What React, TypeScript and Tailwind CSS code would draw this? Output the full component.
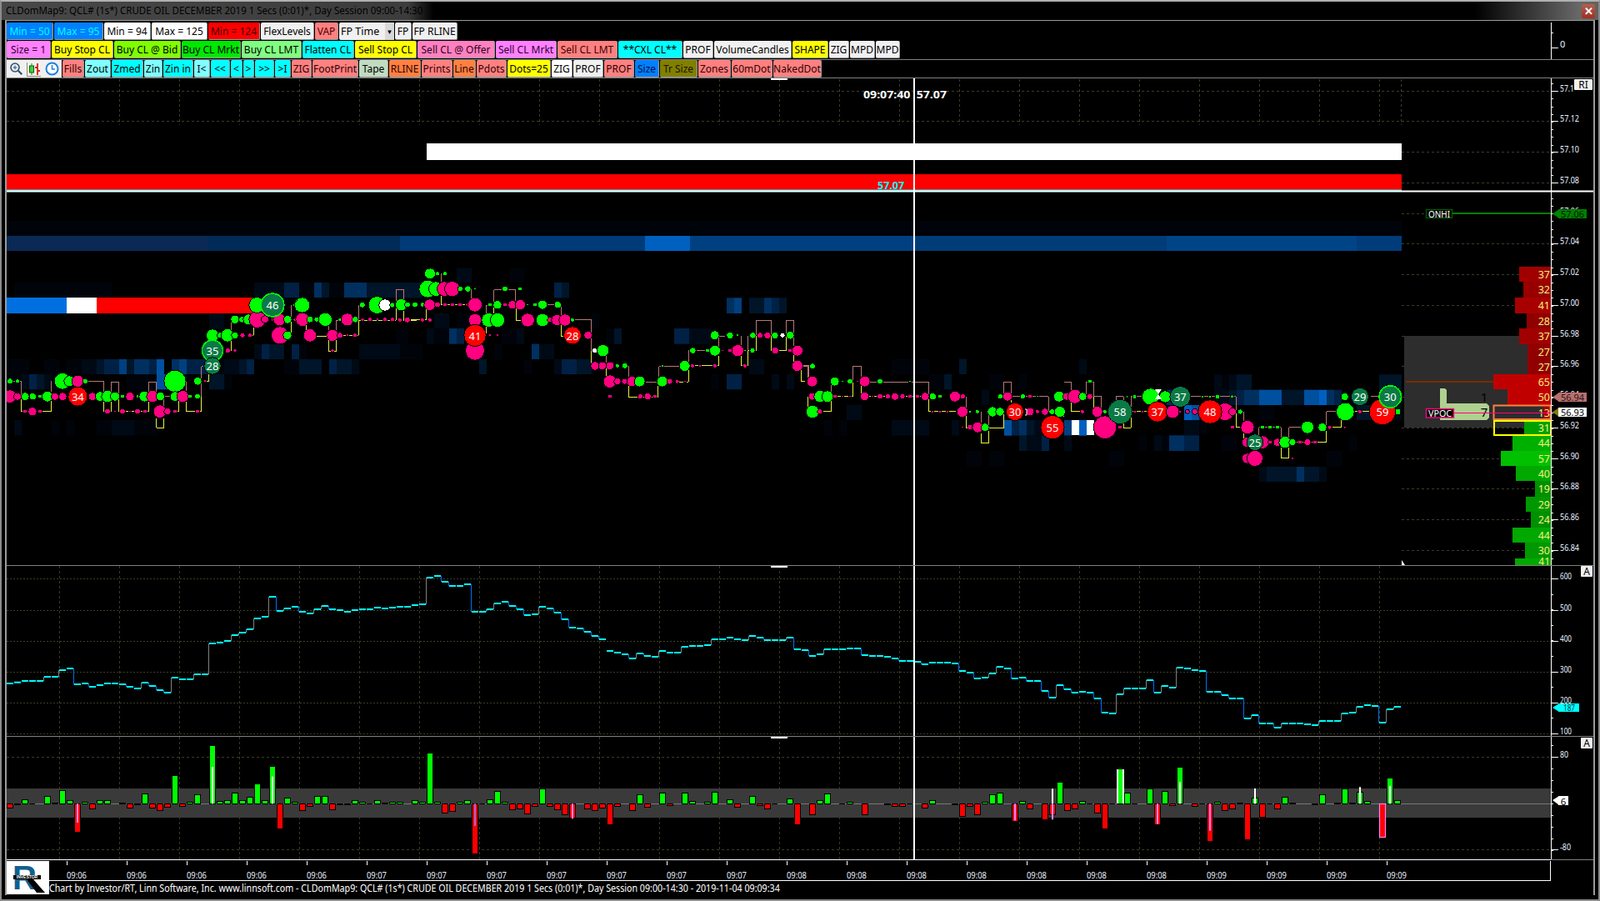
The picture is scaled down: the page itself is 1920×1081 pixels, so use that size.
import React from "react";

type Btn = [string, number, string];
const row1: Btn[] = [
  ["Min = 50", 56, "bg-[#0080ff] text-[#00ffff]"],
  ["Max = 95", 59, "bg-[#0080ff] text-[#00ffff]"],
  ["Min = 94", 56, "bg-white text-black"],
  ["Max = 125", 67, "bg-white text-black"],
  ["Min = 124", 62, "bg-[#ff0000] text-[#400000]"],
  ["FlexLevels", 64, "bg-[#f0f0f0] text-black"],
  ["VAP", 28, "bg-[#ff8080] text-[#500000]"],
];
const row1b: Btn[] = [
  ["FP", 20, "bg-[#f0f0f0] text-black"],
  ["FP RLINE", 54, "bg-[#f0f0f0] text-black"],
];
const row2: Btn[] = [
  ["Size = 1", 53, "bg-[#ff80ff] text-[#300030]"],
  ["Buy Stop CL", 74, "bg-[#ffff00] text-black"],
  ["Buy CL @ Bid", 80, "bg-[#80ff00] text-black"],
  ["Buy CL Mrkt", 71, "bg-[#00e800] text-black"],
  ["Buy CL LMT", 72, "bg-[#80ff80] text-black"],
  ["Flatten CL", 62, "bg-[#00ffff] text-black"],
  ["Sell Stop CL", 74, "bg-[#ffff00] text-black"],
  ["Sell CL @ Offer", 93, "bg-[#ff80c0] text-[#300018]"],
  ["Sell CL Mrkt", 73, "bg-[#ff80ff] text-[#300030]"],
  ["Sell CL LMT", 72, "bg-[#ff8080] text-[#400000]"],
  ["**CXL CL**", 77, "bg-[#00ffff] text-black"],
  ["PROF", 36, "bg-[#f0f0f0] text-black"],
  ["VolumeCandles", 93, "bg-[#f0f0f0] text-black"],
  ["SHAPE", 43, "bg-[#ffff00] text-black"],
  ["ZIG", 24, "bg-[#f0f0f0] text-black"],
  ["MPD", 30, "bg-[#f0f0f0] text-black"],
  ["MPD", 29, "bg-[#f0f0f0] text-black"],
];
const row3: Btn[] = [
  ["Fills", 26, "bg-[#ff8080] text-[#300000]"],
  ["Zout", 31, "bg-[#80ffff] text-black"],
  ["Zmed", 38, "bg-[#00ffff] text-black"],
  ["Zin", 22, "bg-[#80ffff] text-black"],
  ["Zin in", 36, "bg-[#00ffff] text-black"],
  ["I<", 19, "bg-[#80ffff] text-black"],
  ["<<", 23, "bg-[#00ffff] text-black"],
  ["<", 14, "bg-[#00ffff] text-black"],
  [">", 13, "bg-[#00ffff] text-black"],
  [">>", 23, "bg-[#00ffff] text-black"],
  [">I", 19, "bg-[#00ffff] text-black"],
  ["ZIG", 24, "bg-[#ff8080] text-[#300000]"],
  ["FootPrint", 55, "bg-[#ff8080] text-[#300000]"],
  ["Tape", 35, "bg-[#c0dcc0] text-black"],
  ["RLINE", 38, "bg-[#ff8040] text-[#300000]"],
  ["Prints", 37, "bg-[#ff8080] text-[#300000]"],
  ["Line", 27, "bg-[#ff8040] text-[#300000]"],
  ["Pdots", 36, "bg-[#ff8080] text-[#300000]"],
  ["Dots=25", 52, "bg-[#ffff00] text-black"],
  ["ZIG", 25, "bg-white text-black"],
  ["PROF", 36, "bg-[#f0f0f0] text-black"],
  ["PROF", 36, "bg-[#ff8080] text-[#300000]"],
  ["Size", 29, "bg-[#0080ff] text-[#001040]"],
  ["Tr Size", 45, "bg-[#808000] text-[#201000]"],
  ["Zones", 39, "bg-[#ff8080] text-[#300000]"],
  ["60mDot", 49, "bg-[#ff8080] text-[#300000]"],
  ["NakedDot", 58, "bg-[#ff8080] text-[#300000]"],
];

const Button = ({ b }: { b: Btn }) => (
  <div
    className={`flex h-[21px] shrink-0 items-center justify-center overflow-hidden whitespace-nowrap rounded-[2px] border-r border-b border-[#9a9a9a] pt-[2px] text-[12px] ${b[2]}`}
    style={{ width: b[1] }}
  >
    {b[0]}
  </div>
);

// heat map -----------------------------------------------------
const heat = ["", "#00040a", "#000a16", "#001529", "#002145", "#003060", "#004080", "#0050a0", "#0060c0"];
type HR = [number, number, number, number, number[]];
const heatRows: HR[] = [
  [0, 320, 333, 54, [24, 1, 51, 1, 78, 1, 159, 1, 186, 1, 240, 1, 267, 1, 294, 2, 321, 2, 348, 3, 375, 4, 402, 4, 429, 6, 456, 3, 483, 5, 510, 5, 537, 4, 564, 7, 618, 5, 645, 6, 672, 4, 699, 4, 726, 4, 753, 1, 780, 1, 807, 2, 834, 2, 861, 3, 888, 4, 1023, 1, 1050, 1, 1077, 3, 1104, 3, 1131, 3, 1185, 4, 1212, 3, 1239, 3, 1266, 2]],
  [0, 320, 387, 55, [24, 1, 51, 1, 78, 2, 105, 4, 132, 3, 159, 2, 186, 1, 456, 1, 483, 1, 510, 1, 537, 1, 564, 7, 591, 7, 618, 1, 753, 3, 780, 3, 807, 1]],
  [0, 320, 57, 54, [51, 1, 78, 1, 105, 1, 132, 1, 159, 1, 186, 1, 213, 1, 240, 1, 267, 1, 294, 1, 321, 1, 348, 1, 375, 1, 915, 2, 942, 2, 969, 2, 996, 2, 1023, 4, 1050, 4, 1077, 1, 1104, 1, 1131, 5, 1158, 3, 1185, 1, 1212, 1, 1239, 5, 1266, 5, 1293, 5, 1320, 3, 1347, 3, 1374, 3, 1401, 3, 1428, 3]],
  [0, 320, 279, 54, [915, 2, 942, 4, 969, 3, 996, 3, 1050, 4, 1077, 1, 1293, 2, 1320, 2, 1347, 2, 1374, 2, 1401, 2, 1428, 2]],
  [0, 320, 168, 57, [753, 2, 780, 2]],
  [0, 320, 225, 54, [1428, 1]],
  [0, 320, 552, 55, [51, 2, 186, 1, 240, 1, 348, 1, 375, 1, 402, 2, 429, 2, 456, 2, 483, 1, 510, 1, 537, 1]],
  [480, 300, 117, 55, [0, 3, 27, 3, 54, 3, 555, 4, 582, 3]],
  [480, 300, 64, 53, [204, 2, 231, 2, 393, 1, 420, 1]],
  [480, 300, 228, 54, [123, 2, 150, 2, 204, 1, 231, 1, 690, 1]],
  [480, 300, 172, 56, [1176, 5, 1203, 6, 1257, 3, 1284, 3, 1311, 5, 1338, 4, 1365, 3]],
  [480, 300, 282, 56, [0, 1, 96, 2, 123, 1, 150, 1, 177, 5, 204, 4, 366, 1, 393, 1, 420, 2, 744, 1, 771, 3, 987, 4, 1014, 4, 1041, 2, 1068, 2, 1095, 2]],
  [480, 300, 338, 55, [0, 1, 27, 1, 54, 1, 339, 1, 474, 5, 501, 2, 528, 2]],
  [480, 300, 393, 54, [285, 3, 447, 1, 555, 2, 582, 4, 609, 4, 636, 3, 663, 3, 1257, 2, 1284, 2]],
  [480, 300, 447, 55, [1120, 1, 1176, 4, 1203, 4, 1338, 2, 1392, 2]],
  [960, 420, 32, 55, [330, 1, 357, 1, 384, 1, 411, 1, 438, 1, 573, 3, 1005, 2]],
  [960, 420, 87, 55, [465, 1, 492, 1, 519, 3, 681, 1, 708, 1, 789, 1]],
  [960, 420, 142, 55, [654, 2]],
  [960, 420, 197, 55, [168, 2, 195, 2]],
  [960, 420, 252, 56, [87, 1, 141, 1, 330, 2, 357, 2, 384, 2, 411, 2, 438, 2, 546, 2, 735, 7, 762, 4, 789, 5, 816, 3, 843, 2, 870, 2, 951, 6, 1005, 8]],
  [960, 420, 308, 55, [789, 3, 816, 2, 843, 2, 870, 4, 951, 2]],
  [960, 420, 363, 55, [600, 1, 627, 1, 681, 1, 708, 1]],
  [1300, 440, 28, 55, [471, 2, 498, 1, 525, 2, 552, 3, 579, 3, 1065, 3, 1092, 3, 1119, 3]],
  [1300, 440, 83, 55, [300, 5, 471, 2, 498, 2, 525, 3, 552, 4, 579, 5, 606, 5, 633, 7, 660, 7, 687, 7, 714, 3, 741, 3, 768, 3, 795, 7, 822, 7, 849, 8, 876, 5, 903, 4]],
  [1300, 440, 138, 54, [363, 8, 390, 7, 417, 4, 633, 1, 660, 1, 984, 3, 1011, 3, 1065, 3, 1092, 3, 1119, 2]],
  [1300, 440, 192, 55, [363, 2, 390, 2, 417, 1]],
  [1300, 440, 247, 56, [201, 1, 255, 2, 282, 1, 309, 5, 336, 5, 363, 4, 390, 4, 498, 1, 525, 1, 957, 1]],
  [1300, 440, 303, 55, [93, 1, 120, 1, 876, 1, 903, 1]],
  [1300, 440, 360, 54, [633, 2, 660, 3, 687, 3, 714, 3, 741, 3, 768, 5, 795, 3, 822, 3, 849, 2]],
];
const bandCols: [number, number, string][] = [
  [8, 250, "#0a2a55"], [250, 480, "#002a58"], [480, 774, "#003a78"], [774, 828, "#0060c0"],
  [828, 1100, "#004080"], [1100, 1400, "#003c78"], [1400, 1628, "#004488"], [1628, 1682, "#003c7a"],
];

type Ln = [number, number, string, string];
const lines: Ln[] = [
  [0, 320, "#b87878", "M36 412H76V467M185 467V412M307 412H373V467M400 467V415H428V467M535 467V415H563V467M590 467V500M577 467H630M670 412V460M725 467V360H765M832 247V190H846M1048 138V190M1183 190V247M1210 247V193H1224M1291 193V140H1305M1426 138V82H1453V138"],
  [0, 320, "#e8f040", "M76 467V522H90M150 522H185V467M373 467V522H387M400 467V522M428 467V522M441 522H535V467M563 545V580H590V545M643 467V522H630M670 467V522H711M725 467V522H711M752 412V385M740 412H752M832 247V302M913 247V215M900 247H913M1048 190V247H1035M1102 190V250H1183M1183 265V305H1210V265M1224 247H1291V193M1291 193H1426V138M1453 138V193H1500"],
  [480, 300, "#b87878", "M148 85V115M256 140V175M310 252V199H324M338 197V143H417V197M527 197H580V240M621 252H689V417M742 380V405M823 417V460M885 475H925M932 458V419H1010M1039 417V363H1100M1147 307V350M1147 310H1170M1228 310V362M1254 362V310M1282 307V253H1337V307M1390 307V253H1417V350M1445 417H1472V473"],
  [480, 300, "#e8f040", "M94 205V252H40M148 165V197H243M310 275V300M338 197V229M418 197V254H436M580 252V310H592M689 362V405M742 417V455M823 490V529H930V490M1039 430V475H1000M1147 380V417H1040M1228 362V417H1254V362M1282 307V362H1254M1336 307V362H1390V307M1417 375V417M1445 417V473H1458"],
  [960, 420, "#b87878", "M5 58H30V100M112 168V125M192 113V58H220V113M250 115H464V167M598 222V167H570M652 222V275M680 278V235M733 167V115H760V167M760 168H895V222M950 115H976V167"],
  [960, 420, "#e8f040", "M5 70V113M30 167V220M112 167V222H85M112 168H192V113M220 130V167H450M464 167V222H560M598 222V282H640M652 300V335H680V290M680 280H735V230M760 180V190M976 167V222H1020M950 222V240"],
  [1300, 440, "#b87878", "M10 108V55H37V108M37 108H65V162M118 120V108H145V120M172 162V108H215M386 108H550V162M578 162V200M632 250V218H712V272M740 272V218H800M875 218V162H920M1035 108H1070"],
  [1300, 440, "#e8f040", "M37 108V162M145 190V220H172V162M172 162H240M550 162V218H564M578 235V270M712 285V330H740V285M875 230V272H760M875 218H928V190M975 162H1030"],
];

type Bb = [number, number, number, string, string?];
type Grp = [number, number, Bb[]];
const mk = (y: number, c: string, arr: number[]): Bb[] => {
  const o: Bb[] = [];
  for (let i = 0; i < arr.length; i += 2) o.push([arr[i], y, arr[i + 1], c]);
  return o;
};
const groups: Grp[] = [
  [0, 320, [
    ...mk(412, "G", [36, 9, 63, 6, 225, 28, 250, 18]), ...mk(412, "P", [280, 20, 738, 3]), ...mk(412, "G", [307, 8, 630, 38, 712, 13]),
    ...mk(467, "P", [36, 22, 63, 12]), ...mk(467, "G", [91, 13, 118, 11, 144, 6, 171, 18]), ...mk(467, "P", [198, 12, 226, 13]),
    [280, 467, 33, "R", "34"], ...mk(467, "P", [333, 13]), ...mk(467, "G", [360, 16, 387, 20, 414, 15, 441, 6]), ...mk(467, "P", [468, 14]),
    ...mk(467, "G", [495, 4, 520, 18]), ...mk(467, "P", [549, 20]), ...mk(467, "G", [577, 14, 630, 16]), ...mk(467, "P", [658, 20]), ...mk(467, "G", [684, 6, 711, 9]),
    ...mk(521, "P", [90, 6, 117, 14, 144, 6, 387, 9, 414, 3, 441, 9, 468, 3, 495, 9, 522, 6, 576, 22, 603, 11, 630, 6, 711, 6]),
    ...mk(302, "P", [820, 8, 846, 5, 1197, 5]),
    ...mk(247, "G", [765, 21, 792, 9, 819, 22, 846, 11]), ...mk(247, "P", [873, 8, 900, 6, 1008, 30]), ...mk(247, "G", [1035, 14]), ...mk(247, "P", [1116, 22, 1197, 20, 1224, 9, 1251, 3, 1278, 6]),
    ...mk(190, "G", [846, 14, 871, 10, 895, 18]), ...mk(190, "P", [927, 29, 954, 12, 981, 4, 1006, 21]), ...mk(190, "G", [1036, 13]), ...mk(190, "P", [1062, 5, 1089, 23]),
    ...mk(190, "G", [1116, 10, 1140, 8, 1171, 23, 1224, 5]), ...mk(190, "P", [1250, 21]), ...mk(190, "G", [1279, 10]), ...mk(190, "P", [1305, 5, 1332, 6, 1359, 3, 1386, 6, 1413, 6]),
    ...mk(138, "G", [925, 27, 1062, 5, 1088, 26, 1305, 9, 1358, 30]), ...mk(138, "W", [1386, 20]), ...mk(138, "G", [1413, 8]),
    [981, 138, 40, "D", "46"], [765, 302, 36, "D", "35"], [765, 357, 29, "D", "28"],
  ]],
  [480, 300, [
    ...mk(85, "G", [108, 18, 135, 6, 162, 6]),
    ...mk(140, "G", [100, 30, 130, 25]), ...mk(140, "P", [160, 25, 188, 26]), ...mk(140, "G", [217, 8, 244, 10, 270, 3, 378, 9, 432, 6]),
    ...mk(197, "G", [5, 20, 27, 9, 54, 9, 81, 7]), ...mk(197, "P", [107, 19, 135, 9, 162, 6, 189, 6, 216, 6, 243, 5, 270, 24]), ...mk(197, "G", [324, 6, 351, 14]), ...mk(197, "P", [378, 6, 405, 14, 433, 17]), ...mk(197, "G", [459, 3, 486, 6, 513, 15, 568, 11]),
    ...mk(252, "P", [0, 6, 27, 9, 81, 6, 108, 6, 270, 22]), ...mk(252, "G", [319, 24, 351, 24]), ...mk(252, "P", [460, 23]), ...mk(252, "G", [513, 22]), ...mk(252, "P", [540, 8, 565, 18, 594, 20]), ...mk(252, "G", [621, 6]),
    ...mk(362, "P", [270, 33]), [270, 307, 38, "R", "41"], ...mk(307, "P", [324, 3, 351, 3]), [621, 307, 30, "R", "28"], ...mk(307, "P", [677, 13]),
    ...mk(307, "G", [1133, 15, 1188, 11, 1215, 3, 1270, 10]), ...mk(307, "P", [1296, 9, 1323, 11]), ...mk(307, "G", [1350, 11]), ...mk(307, "W", [1377, 8]), ...mk(307, "G", [1405, 13]),
    ...mk(362, "W", [701, 8]), ...mk(362, "G", [731, 20, 1054, 10, 1107, 6, 1134, 18]), ...mk(362, "P", [1161, 3, 1188, 6, 1216, 20]), ...mk(362, "G", [1242, 3, 1269, 8]), ...mk(362, "P", [1351, 11, 1404, 6, 1431, 18]),
    ...mk(417, "P", [702, 14, 729, 13, 756, 13]), ...mk(417, "G", [783, 6, 810, 9, 945, 3, 1025, 18]), ...mk(417, "P", [1053, 6, 1080, 3, 1134, 6, 1242, 6, 1431, 18]),
    ...mk(473, "P", [756, 22, 783, 11, 808, 9, 835, 17]), ...mk(473, "G", [863, 18, 944, 18]), ...mk(473, "P", [971, 9, 998, 6, 1026, 3]),
    ...mk(527, "P", [756, 6, 865, 8, 892, 11, 918, 6]),
  ]],
  [960, 420, [
    ...mk(58, "G", [45, 9]), ...mk(113, "P", [44, 18]), ...mk(113, "G", [125, 15, 153, 3, 180, 9]), ...mk(113, "P", [207, 3, 233, 18]), ...mk(113, "G", [288, 9, 396, 3]),
    ...mk(167, "P", [44, 12]), ...mk(167, "G", [72, 20, 99, 19]), ...mk(167, "P", [126, 6, 153, 3, 180, 3, 233, 14, 261, 3, 288, 9, 316, 8, 342, 12, 369, 8, 396, 6, 423, 6, 451, 13]),
    ...mk(167, "G", [478, 11, 504, 6]), ...mk(167, "P", [558, 18, 586, 8]), ...mk(167, "G", [721, 8]), ...mk(167, "P", [747, 15]), ...mk(167, "G", [802, 8]), ...mk(167, "P", [828, 6]), ...mk(167, "G", [855, 3, 933, 18]), ...mk(167, "P", [960, 12, 990, 24]), ...mk(167, "G", [1018, 13]),
    ...mk(222, "G", [45, 22]), ...mk(222, "P", [72, 8, 477, 3, 504, 3, 531, 3, 585, 18]), ...mk(222, "G", [612, 3, 639, 6, 693, 17, 720, 14]), [774, 222, 30, "R", "30"], ...mk(222, "P", [828, 13, 855, 6, 882, 11]), ...mk(222, "G", [907, 9, 936, 18]), ...mk(222, "P", [1017, 6]),
    ...mk(278, "P", [585, 3, 612, 8, 640, 18]), ...mk(278, "G", [667, 13]), [909, 278, 41, "R", "55"],
  ]],
  [1300, 440, [
    ...mk(53, "G", [24, 6]), ...mk(108, "P", [24, 9]), ...mk(108, "G", [158, 3, 185, 6, 242, 29, 295, 20, 429, 3, 456, 3, 483, 7, 537, 5, 941, 12]),
    ...mk(162, "P", [50, 18]), ...mk(162, "G", [78, 6]), ...mk(218, "P", [78, 40, 132, 6]), ...mk(162, "P", [186, 3, 213, 3]), [267, 162, 35, "R", "37"], ...mk(162, "P", [322, 22, 348, 3, 375, 6, 402, 9, 510, 30, 537, 12]), ...mk(162, "G", [565, 8, 943, 31]), ...mk(162, "P", [996, 6]), ...mk(162, "G", [1132, 10]),
    [132, 162, 43, "D", "58"], [349, 108, 36, "D", "37"], [456, 162, 41, "R", "48"],
    ...mk(218, "P", [537, 6, 591, 23, 887, 6]), ...mk(218, "G", [861, 14, 807, 21]), ...mk(218, "P", [942, 3]), ...mk(218, "G", [645, 6, 672, 6, 699, 6]),
    ...mk(272, "P", [590, 17, 645, 22, 672, 6, 699, 13]), ...mk(272, "G", [726, 20, 753, 11]), ...mk(272, "P", [780, 6, 807, 11, 834, 6]),
    [618, 272, 28, "D", "25"], ...mk(330, "P", [590, 17, 618, 27, 753, 3]),
    [996, 108, 30, "D", "29"], [1077, 162, 46, "R", "59"], [1105, 108, 38, "D", "30"],
  ]],
];
const fillOf: Record<string, string> = { G: "#00ff00", P: "#ff0080", W: "#ffffff", R: "#ff0000", D: "#0a7a45" };
const ringed = ["46", "35", "30"];

const prof: [string, number, number, number, string][] = [
  ["37", 320, 18, 1823, "#a00000"], ["32", 338, 19, 1828, "#980000"], ["41", 357, 19, 1818, "#a80000"], ["28", 376, 18, 1832, "#900000"],
  ["37", 394, 19, 1823, "#a00000"], ["27", 413, 18, 1833, "#900000"], ["27", 431, 18, 1833, "#900000"], ["65", 449, 18, 1792, "#c00000"],
  ["50", 467, 19, 1809, "#c00000"], ["13", 486, 18, 1852, "#a00000"], ["31", 504, 18, 1829, "#00a000"], ["44", 522, 19, 1815, "#00b000"],
  ["57", 541, 18, 1801, "#00c000"], ["40", 559, 18, 1819, "#00a800"], ["19", 577, 19, 1842, "#009000"], ["29", 596, 18, 1831, "#009800"],
  ["24", 614, 19, 1837, "#009000"], ["44", 633, 18, 1815, "#00a800"], ["30", 651, 19, 1830, "#009800"], ["41", 670, 8, 1818, "#00a800"],
];

const vol = [420,416,411,411,411,396,396,372,366,423,420,432,426,420,420,423,432,438,417,429,444,453,399,405,405,387,387,276,273,267,246,237,225,186,180,108,159,150,144,162,168,153,141,153,156,162,156,153,153,147,150,147,144,144,138,135,39,33,54,69,69,63,162,162,153,132,126,141,153,174,171,144,150,165,189,219,222,234,249,261,303,309,315,330,312,321,324,303,309,309,288,285,285,282,261,261,255,261,264,249,255,264,264,264,255,297,300,321,315,297,297,297,294,294,318,321,321,324,330,339,339,342,351,345,345,345,348,375,381,402,399,384,360,366,402,399,411,411,447,471,426,441,453,450,453,474,525,528,459,438,438,438,408,453,429,435,363,366,372,375,450,450,462,474,474,546,534,564,564,579,564,564,564,567,570,555,555,555,528,525,504,498,501,561,513,504];

const bars = [-15,-1,15,0,0,27,1,47,12,-103,6,-18,12,12,0,1,-15,-3,36,-15,-24,-12,100,-11,6,33,0,208,9,12,39,12,24,72,12,133,-92,21,6,-24,-9,27,27,-21,-3,-3,12,6,0,12,1,6,6,0,12,6,181,6,-33,-27,6,12,-182,0,15,45,6,-21,-18,-36,-9,
  54,-9,-21,-39,-51,0,-18,-24,-15,-76,-9,0,-24,33,-12,0,39,-6,0,39,9,0,6,42,0,15,-12,0,27,-6,-18,0,0,18,-75,0,-39,12,36,0,0,6,0,-39,0,0,-1,-9,-9,0,0,-15,12,0,0,-1,-45,-9,-39,6,33,39,0,-63,9,-18,0,-57,-39,78,-24,
  -18,9,0,-33,-91,0,125,39,0,0,53,-75,45,-6,130,0,-9,0,-136,6,-24,-18,1,-130,21,-50,0,-18,24,1,0,0,-1,33,0,1,53,1,42,9,0,-120,91,12];
const overlays: [number, number, string][] = [
  [27, 133, "#fff"], [35, 98, "#fff"], [156, 78, "#fff"], [166, 55, "#fff"], [180, 60, "#fff"], [184, 64, "#fff"], [139, 54, "#fff"],
  [9, -68, "#ff80ff"], [62, -80, "#c060d0"], [75, -54, "#ff80ff"], [134, -60, "#ff80ff"], [139, -57, "#ff80ff"], [153, -73, "#ff80ff"], [160, -97, "#ff80ff"],
];

const gridXs = Array.from({ length: 23 }, (_, i) => 71.5 + 72 * i);
const times = [
  ...Array(5).fill("09:06"), ...Array(7).fill("09:07"), ...Array(7).fill("09:08"), ...Array(4).fill("09:09"),
] as string[];
const DASH = "#3c3c28";
const axisColor = "#e8f0ff";

const AxisLabel = ({ x, y, t, w }: { x: number; y: number; t: string; w: number }) => (
  <text x={x} y={y} fill={axisColor} fontSize={11} dominantBaseline="central" textLength={w} lengthAdjust="spacingAndGlyphs">
    {t}
  </text>
);

const Tag = ({ y, t, bg, fg, arrow }: { y: number; t: string; bg: string; fg: string; arrow?: string }) => (
  <g>
    <polygon points={`1863,${y + 5.5} 1871,${y} 1871,${y + 11}`} fill={arrow || bg} />
    <rect x={1870} y={y} width={34} height={11} fill={bg} />
    <text x={1873} y={y + 5.5} fill={fg} fontSize={11.5} dominantBaseline="central" textLength={28} lengthAdjust="spacingAndGlyphs">
      {t}
    </text>
  </g>
);

const MainPanel = () => {
  const yMaj: [number, string][] = [
    [109, "57.1"], [145, "57.12"], [182, "57.10"], [219, "57.08"], [256, "57.06"], [292, "57.04"], [329, "57.02"], [366, "57.00"], [403, "56.98"],
    [439, "56.96"], [476, "56.94"], [513, "56.92"], [550, "56.90"], [586, "56.88"], [623, "56.86"], [660, "56.84"],
  ];
  const ticks: number[] = [];
  for (let y = 100; y < 678; y += 9.19) ticks.push(Math.round(y));
  return (
    <svg width={1904} height={584} viewBox="8 94 1904 584" className="block">
      {gridXs.map((x) => (
        <line key={x} x1={x} x2={x} y1={95} y2={150} stroke={DASH} strokeDasharray="3 3" />
      ))}
      <line x1={1681.5} x2={1681.5} y1={95} y2={150} stroke={DASH} strokeDasharray="3 3" />
      {[109.5, 145.5].map((y) => (
        <line key={y} x1={8} x2={1861} y1={y} y2={y} stroke={DASH} strokeDasharray="3 3" />
      ))}
      {yMaj.slice(2).map(([y]) => (
        <line key={y} x1={1682} x2={1861} y1={y + 0.5} y2={y + 0.5} stroke={DASH} strokeDasharray="3 3" />
      ))}

      {bandCols.map(([a, b, c]) => (
        <rect key={a} x={a} y={283} width={b - a} height={18} fill={c} />
      ))}
      <rect x={8} y={265} width={1674} height={18} fill="#00040a" />
      {heatRows.map(([ox, oy, top, h, cells], ri) =>
        Array.from({ length: cells.length / 2 }, (_, i) => (
          <rect key={`${ri}-${i}`} x={ox + cells[i * 2] / 3} y={oy + top / 3} width={9} height={h / 3} fill={heat[cells[i * 2 + 1]]} />
        ))
      )}
      <rect x={1286} y={504} width={9} height={18} fill="#ffffff" />
      <rect x={1304} y={504} width={9} height={18} fill="#ffffff" />

      <rect x={512} y={172} width={1170} height={20} fill="#ffffff" />
      <rect x={8} y={209} width={1674} height={19} fill="#ff0000" />
      <rect x={8} y={227.5} width={1674} height={1.5} fill="#00ffff" />
      <rect x={8} y={357} width={72} height={19} fill="#0070e0" />
      <rect x={80} y={357} width={36} height={19} fill="#ffffff" />
      <rect x={116} y={357} width={190} height={19} fill="#ff0000" />

      <rect x={1685} y={403} width={176} height={110} fill="#2d2d2d" />
      <rect x={1687} y={457} width={105} height={2} fill="#7a2a00" />
      <path d="M1728 466h6l2 2v16h48l3 3v14l-3 3h-56z" fill="#b0d090" />
      <text x={1781} y={476} fontSize={15} fill="#000" textAnchor="middle" dominantBaseline="central">1</text>
      <text x={1781} y={494} fontSize={15} fill="#000" textAnchor="middle" dominantBaseline="central">7</text>

      {prof.map(([t, y, h, left, c]) => (
        <g key={y}>
          <rect x={left} y={y} width={1861 - left} height={h} fill={c} />
          {h > 10 ? (
            <text x={1860} y={y + h / 2} fontSize={12.5} fill="#f4f080" textAnchor="end" dominantBaseline="central">{t}</text>
          ) : (
            <text x={1860} y={y + 3} fontSize={12} fill="#f4f080" textAnchor="end" dominantBaseline="central">{t}</text>
          )}
        </g>
      ))}
      <rect x={1792.5} y={486.5} width={68} height={16.5} fill="none" stroke="#ff8040" strokeWidth={2} />
      <rect x={1793} y={505} width={68} height={17} fill="none" stroke="#ffff00" strokeWidth={2} />
      <line x1={1745} x2={1861} y1={495.5} y2={495.5} stroke="#ff0080" />
      <rect x={1711.5} y={490.5} width={33} height={10.5} fill="#000" stroke="#ff0080" strokeWidth={1.4} />
      <text x={1714} y={496} fontSize={10} fill="#fff" dominantBaseline="central" textLength={28} lengthAdjust="spacingAndGlyphs">VPOC</text>

      {lines.map(([ox, oy, c, d], i) => (
        <path key={i} d={d} transform={`translate(${ox} ${oy}) scale(0.3333)`} fill="none" stroke={c} strokeWidth={3} shapeRendering="crispEdges" />
      ))}
      {groups.map(([ox, oy, arr], gi) => (
        <g key={gi} transform={`translate(${ox} ${oy}) scale(0.3333)`}>
          {arr.map(([x, y, r, c, label], i) => {
            const ring = c === "D" && !!label && ringed.includes(label);
            return (
              <g key={i}>
                <circle cx={x} cy={y} r={r + 1.5} fill={fillOf[c]} stroke={ring ? "#00ff00" : "#000"} strokeWidth={ring ? 5 : 3} shapeRendering="crispEdges" />
                {label && (
                  <text x={x} y={y + 1} fill="#fff" fontSize={39} textAnchor="middle" dominantBaseline="central">{label}</text>
                )}
              </g>
            );
          })}
        </g>
      ))}
      <polygon points="1386,467 1394,467 1390,473 1394,479 1386,479 1390,473" fill="#fff" />
      <path d="M1230 491h2v7h-2" fill="none" stroke="#fff" />

      <rect x={1096} y={94} width={2} height={584} fill="#ffffff" />
      <rect x={8} y={228.5} width={1853} height={2} fill="#ffffff" />
      <rect x={1861} y={228.5} width={51} height={2} fill="#ffffff" />
      <text x={1036} y={113} fontSize={13} fontWeight={700} fill="#fff" dominantBaseline="central" textLength={100} lengthAdjust="spacingAndGlyphs" xmlSpace="preserve">09:07:40  57.07</text>
      <text x={1053} y={222} fontSize={12.5} fontWeight={700} fill="#00ffff" dominantBaseline="central">57.07</text>

      <rect x={1861} y={94} width={1} height={584} fill="#fff" />
      {ticks.map((y) => (
        <rect key={y} x={1861} y={y} width={3} height={1} fill="#fff" />
      ))}
      {yMaj.map(([y, t]) => (
        <g key={t}>
          <rect x={1861} y={y} width={9} height={1} fill="#fff" />
          <AxisLabel x={1872} y={y - 4} t={t} w={t.length === 4 ? 17 : 23} />
        </g>
      ))}

      <line x1={1743} x2={1861} y1={256} y2={256} stroke="#008000" strokeWidth={2} />
      <rect x={1711.5} y={251.5} width={31} height={10} fill="#000" stroke="#006000" strokeWidth={1.2} />
      <text x={1714} y={257} fontSize={10.5} fill="#fff" dominantBaseline="central" textLength={26} lengthAdjust="spacingAndGlyphs">ONHI</text>
      <Tag y={251} t="57.06" bg="#008000" fg="#001800" />
      <Tag y={471} t="56.94" bg="#b87070" fg="#301010" />
      <Tag y={489} t="56.93" bg="#ffffff" fg="#000000" arrow="#808000" />

      <rect x={925} y={94} width={20} height={2} fill="#fff" />
      <path d="M1682 672l4 6h-4z" fill="#fff" />
    </svg>
  );
};

const VolPanel = () => {
  const labels: [number, string][] = [[694, "600"], [732, "500"], [769, "400"], [806, "300"], [843, "200"], [880, "100"]];
  const ticks: number[] = [];
  for (let y = 694; y < 883; y += 18.6) ticks.push(Math.round(y));
  return (
    <svg width={1904} height={204} viewBox="8 679 1904 204" className="block">
      {gridXs.map((x) => (
        <line key={x} x1={x} x2={x} y1={679} y2={883} stroke={DASH} strokeDasharray="3 3" />
      ))}
      {labels.map(([y]) => (
        <line key={y} x1={8} x2={1861} y1={y + 0.5} y2={y + 0.5} stroke={DASH} strokeDasharray="2 2" />
      ))}
      {vol.map((v, i) => {
        const y = 680 + v / 3;
        const x = 8 + 9 * i;
        const prev = i > 0 ? 680 + vol[i - 1] / 3 : y;
        const gap = i === 80;
        return (
          <g key={i}>
            {i > 0 && !gap && Math.abs(y - prev) > 2 && (
              <line x1={x - 0.5} x2={x - 0.5} y1={prev} y2={y} stroke={y > prev ? "#0070f0" : "#808080"} strokeWidth={1} />
            )}
            <rect x={x} y={y - 1} width={8} height={2} fill="#00ffff" />
          </g>
        );
      })}
      <rect x={1096} y={679} width={2} height={204} fill="#ffffff" />
      <rect x={1861} y={679} width={1} height={204} fill="#fff" />
      {ticks.map((y) => (
        <rect key={y} x={1861} y={y} width={3} height={1} fill="#fff" />
      ))}
      {labels.map(([y, t]) => (
        <g key={t}>
          <rect x={1861} y={y} width={9} height={1} fill="#fff" />
          <AxisLabel x={1872} y={y - 4} t={t} w={14} />
        </g>
      ))}
      <polygon points="1863,849 1871,844 1871,854" fill="#00ffff" />
      <rect x={1870} y={844} width={25} height={10} fill="#00ffff" />
      <text x={1876} y={849} fontSize={10.5} fill="#003040" dominantBaseline="central" textLength={14} lengthAdjust="spacingAndGlyphs">187</text>
      <rect x={925} y={679} width={20} height={2} fill="#fff" />
    </svg>
  );
};

const DeltaPanel = () => {
  const base = 964.3;
  const ticks: number[] = [];
  for (let y = 894; y < 1032; y += 14) ticks.push(y);
  return (
    <svg width={1904} height={149} viewBox="8 884 1904 149" className="block">
      <rect x={8} y={946} width={1853} height={35} fill="#3a3a3a" />
      {gridXs.map((x) => (
        <line key={x} x1={x} x2={x} y1={884} y2={1032} stroke={DASH} strokeDasharray="3 3" />
      ))}
      {[908.5, 1019.5].map((y) => (
        <line key={y} x1={8} x2={1861} y1={y} y2={y} stroke={DASH} strokeDasharray="3 3" />
      ))}
      <line x1={8} x2={1861} y1={964.5} y2={964.5} stroke="#777777" />
      {bars.map((v, i) => {
        const x = 8 + 9 * i;
        const h = Math.abs(v) / 3;
        if (v === 0) return <rect key={i} x={x} y={964} width={7} height={1} fill={i % 3 === 0 ? "#000" : "#777"} />;
        return (
          <rect key={i} x={x + 0.5} y={v > 0 ? base - h : base} width={6.5} height={Math.max(h, 1)} fill={v > 0 ? "#00ff00" : "#ff0000"} stroke="#000" strokeWidth={1} shapeRendering="crispEdges" />
        );
      })}
      {overlays.map(([i, v, c], k) => {
        const h = Math.abs(v) / 3;
        return <rect key={k} x={8 + 9 * i + 3} y={v > 0 ? base - h : base} width={2} height={h} fill={c} />;
      })}
      <rect x={1340} y={923} width={2} height={41} fill="#fff" />
      <rect x={1347} y={923} width={2} height={41} fill="#fff" />
      <rect x={1655.5} y={964.5} width={7} height={40} fill="none" stroke="#ff80ff" strokeWidth={1.2} />
      <rect x={1096} y={884} width={2} height={148} fill="#ffffff" />
      <rect x={1861} y={884} width={1} height={148} fill="#fff" />
      {ticks.map((y) => (
        <rect key={y} x={1861} y={y} width={3} height={1} fill="#fff" />
      ))}
      {[[908, "80", 10], [1019, "-80", 13]].map(([y, t, w]) => (
        <g key={t as string}>
          <rect x={1861} y={y as number} width={9} height={1} fill="#fff" />
          <AxisLabel x={1872} y={(y as number) - 4} t={t as string} w={w as number} />
        </g>
      ))}
      <polygon points="1863,960 1871,955 1871,966" fill="#fff" />
      <rect x={1870} y={955} width={12} height={11} fill="#fff" />
      <text x={1876} y={961} fontSize={11.5} fill="#000" textAnchor="middle" dominantBaseline="central">6</text>
      <rect x={8} y={1031} width={1853} height={1} fill="#fff" />
      <rect x={1861} y={1031} width={51} height={1} fill="#808080" />
      <rect x={925} y={884} width={20} height={2} fill="#fff" />
    </svg>
  );
};

const CornerBtn = ({ t, cls }: { t: string; cls: string }) => (
  <div className={`absolute flex items-center justify-center rounded-[1px] bg-[#f0f0f0] text-[12px] text-black ${cls}`}>{t}</div>
);

export default function App() {
  return (
    <div className="flex h-[1081px] w-[1920px] flex-col overflow-hidden border-2 border-[#8c8c8c] border-t-[#b0b0b0] bg-black font-['Liberation_Sans',Arial,sans-serif] leading-none">
      <div className="-mx-[2px] flex h-[22px] shrink-0 items-center justify-between bg-[linear-gradient(90deg,#484848_0,#3c3c3c_490px,#000_520px,#000_1770px,#686868_1895px,#606060_100%)] pl-[7px] pr-[6px]">
        <span className="origin-left scale-x-[0.92] text-[12.5px] whitespace-nowrap text-black">CLDomMap9: QCL# (1s*) CRUDE OIL DECEMBER 2019 1 Secs (0:01)*, Day Session 09:00-14:30</span>
        <div className="flex h-[17px] w-[16px] items-center justify-center rounded-[2px] bg-[linear-gradient(180deg,#b06050,#a03020)] text-[13px] font-bold text-white">✕</div>
      </div>

      <div className="mx-[4px] flex h-[1050px] flex-col border-x-2 border-t border-[#9a9a9a] bg-black">
        <div className="relative h-[47px] shrink-0 border-b border-[#808080] pt-[2px]">
          <div className="flex gap-[1px]">
            {row1.map((b, i) => (
              <Button key={i} b={b} />
            ))}
            <div className="flex h-[21px] w-[66px] shrink-0 items-center justify-between rounded-[2px] bg-[#f0f0f0] pl-[2px] text-[12.5px] text-black">
              <span className="pt-[2px]">FP Time</span>
              <span className="flex h-full w-[11px] items-center justify-center bg-[#d8d8d8] text-[8px]">▼</span>
            </div>
            {row1b.map((b, i) => (
              <Button key={i} b={b} />
            ))}
          </div>
          <div className="mt-[1px] flex gap-[1px]">
            {row2.map((b, i) => (
              <Button key={i} b={b} />
            ))}
          </div>
          <div className="absolute top-[2px] left-[1853px] h-[44px] w-px bg-white" />
          <div className="absolute top-[14px] left-[1853px] h-px w-[3px] bg-white" />
          <div className="absolute top-[32px] left-[1853px] h-px w-[9px] bg-white" />
          <div className="absolute top-[22px] left-[1864px] text-[11px] text-[#e8f0ff]">0</div>
        </div>

        <div className="flex h-[22px] shrink-0 gap-[1px] border-b border-[#808080]">
          <div className="flex h-[21px] w-[66px] shrink-0 items-center justify-around bg-[#f0f0f0] px-[1px]">
            <svg width="17" height="17" viewBox="0 0 17 17">
              <circle cx="7" cy="7" r="5" fill="#e8f0f8" stroke="#305070" strokeWidth="1.6" />
              <path d="M4.5 7h5M7 4.5v5" stroke="#305070" />
              <path d="M10.8 10.8l4.5 4.5" stroke="#305070" strokeWidth="2.2" />
            </svg>
            <svg width="18" height="18" viewBox="0 0 18 18">
              <path d="M0.5 1v16.5H17" fill="none" stroke="#909060" />
              <path d="M6 2v14" stroke="#208020" />
              <rect x="3.5" y="5" width="5" height="8" fill="#40d040" stroke="#106010" />
              <path d="M13 2v14M10 7h3M13 11h3" stroke="#e02010" strokeWidth="1.8" />
            </svg>
            <svg width="17" height="17" viewBox="0 0 17 17">
              <circle cx="8.5" cy="8.5" r="7" fill="#fff" stroke="#2080e0" strokeWidth="2" />
              <path d="M8.5 4v5h3.5" fill="none" stroke="#2080e0" strokeWidth="1.5" />
            </svg>
          </div>
          {row3.map((b, i) => (
            <Button key={i} b={b} />
          ))}
        </div>

        <div className="relative h-[585px] shrink-0 border-b border-[#808080]">
          <MainPanel />
          <CornerBtn t="RI" cls="top-[1px] left-[1881px] h-[13px] w-[22px]" />
        </div>
        <div className="relative h-[205px] shrink-0 border-b border-[#808080]">
          <VolPanel />
          <CornerBtn t="A" cls="top-0 left-[1889px] h-[13px] w-[14px]" />
        </div>
        <div className="relative h-[149px] shrink-0">
          <DeltaPanel />
          <CornerBtn t="A" cls="top-[1px] left-[1889px] h-[13px] w-[14px]" />
        </div>

        <div className="flex h-[41px] shrink-0">
          <div className="h-[40px] w-[51px] shrink-0 bg-white">
            <svg width="51" height="40" viewBox="0 0 51 40">
              <text x="7" y="34" fontSize="40" fontWeight="700" fill="#106090" fontFamily="Liberation Sans">R</text>
              <path d="M24 22l12 16h10L32 22z" fill="#000" />
              <rect x="8" y="17" width="33" height="5" fill="#000" />
              <text x="24.5" y="21" fontSize="5" fontWeight="700" fill="#fff" textAnchor="middle" fontFamily="Liberation Sans">INVESTOR</text>
            </svg>
          </div>
          <div className="min-w-0 flex-1">
            <div className="flex h-[24px] w-[1802px] border-r border-b border-white pl-[21px]">
              {times.map((t, i) => (
                <div key={i} className="w-[72px] shrink-0">
                  <div className="h-[5px] w-px bg-white" />
                  <div className="mt-[6px] origin-left scale-x-[0.85] text-[11px] text-[#e8f0ff]">{t}</div>
                </div>
              ))}
            </div>
            <div className="mt-[3px] origin-left scale-x-[0.89] text-[12px] whitespace-nowrap text-white">
              Chart by Investor/RT, Linn Software, Inc. www.linnsoft.com - CLDomMap9: QCL# (1s*) CRUDE OIL DECEMBER 2019 1 Secs (0:01)*, Day Session 09:00-14:30 - 2019-11-04 09:09:34
            </div>
          </div>
        </div>
      </div>
    </div>
  );
}
